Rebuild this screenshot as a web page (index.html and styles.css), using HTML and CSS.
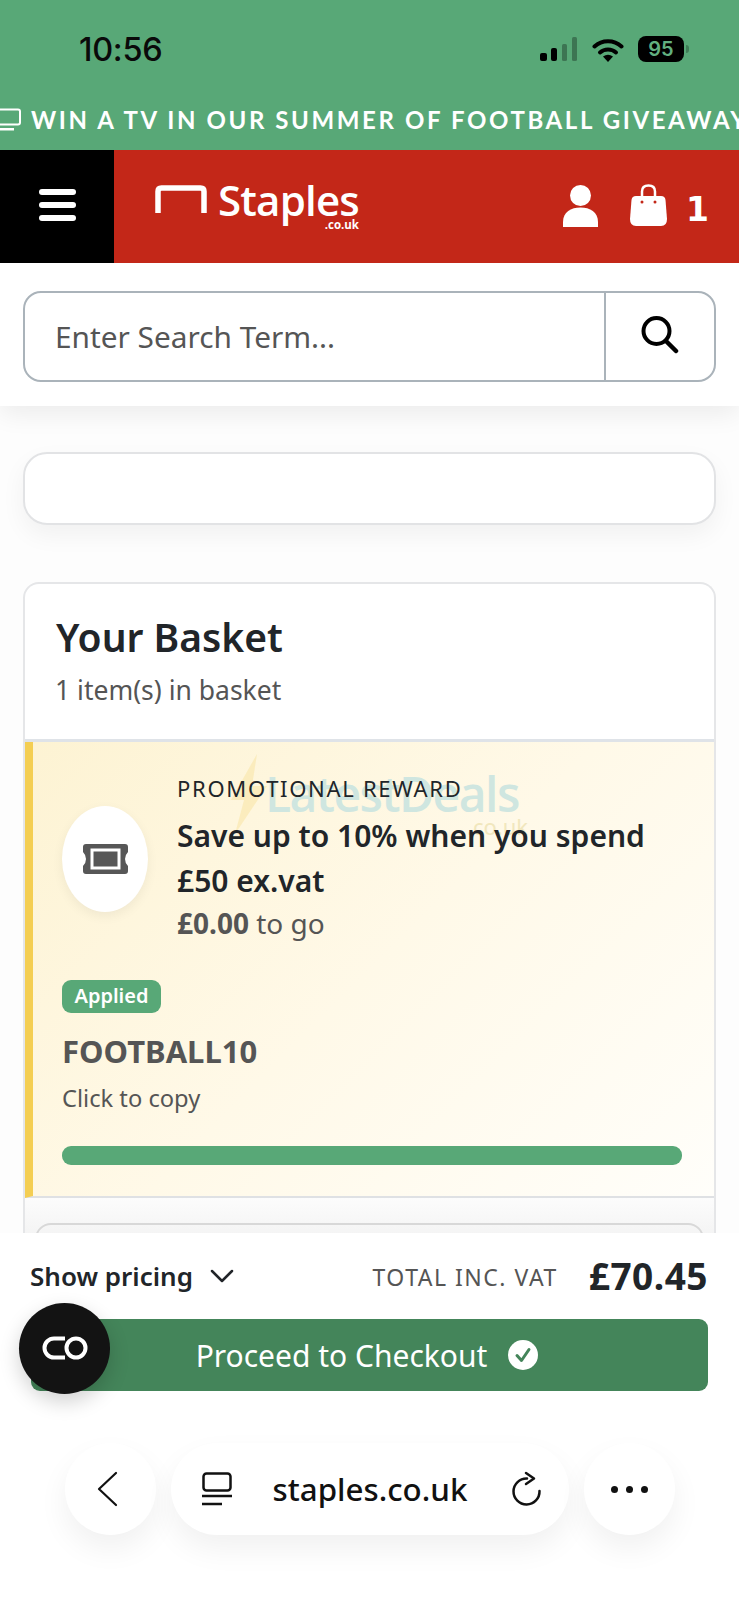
FILE: index.html
```html
<!DOCTYPE html>
<html lang="en">
<head>
<meta charset="utf-8">
<title>Staples basket</title>
<link rel="stylesheet" href="styles.css">
</head>
<body>
<div class="page">
  <header class="top">
    <div class="status">
      <span class="time">10:56</span>
      <div class="status-icons">
        <svg class="signal" viewBox="0 0 37 24" width="37" height="24"><rect x="0" y="16" width="7" height="8" rx="2"/><rect x="11" y="11" width="6" height="13" rx="2"/><rect x="22" y="7" width="5" height="17" rx="1.5" opacity=".3"/><rect x="32" y="0" width="5" height="24" rx="1.5" opacity=".3"/></svg>
        <svg class="wifi" viewBox="0 0 32 25" width="32" height="25"><path d="M2.5 9.5C10 2.5 22 2.500 29.500 9.500" fill="none" stroke="#000" stroke-width="4" stroke-linecap="round"/><path d="M8 15.500C12.500 11.500 19.500 11.500 24 15.500" fill="none" stroke="#000" stroke-width="4" stroke-linecap="round"/><path d="M11 19.500Q16 16 21 19.500L16 25Z"/></svg>
        <span class="battery">95</span>
        <span class="battery-tip"></span>
      </div>
    </div>
    <div class="banner">
      <svg class="banner-icon" viewBox="0 0 22 24" width="22" height="24"><rect x="-6" y="1.500" width="26" height="15" rx="2" fill="none" stroke="#fff" stroke-width="2"/><rect x="-6" y="20" width="20" height="2.500" fill="#fff"/></svg>
      <span>WIN A TV IN OUR SUMMER OF FOOTBALL GIVEAWAY</span>
    </div>
  </header>
  <nav class="brandbar">
    <div class="menu"><span></span><span></span><span></span></div>
    <div class="brand">
      <div class="logo">
        <svg viewBox="0 0 52 28" width="52" height="28"><path d="M3 28V6.500Q3 3 6.500 3H45.500Q49 3 49 6.500V28" fill="none" stroke="#fff" stroke-width="5.500"/></svg>
        <div class="wordmark"><span class="word">Staples</span><span class="tld">.co.uk</span></div>
      </div>
      <div class="actions">
        <svg viewBox="0 0 35 42" width="35" height="42"><circle cx="17.500" cy="10.500" r="10.500" fill="#fff"/><path d="M0 42V37C0 27 8 22.500 17.500 22.500S35 27 35 37V42Z" fill="#fff"/></svg>
        <svg class="bag" viewBox="0 0 37 42" width="37" height="42"><path d="M12 16V7.500C12 3.500 14 1.500 18.500 1.500S25 3.500 25 7.500V16" fill="none" stroke="#fff" stroke-width="2.500"/><path d="M6 12H31Q35 12 35.500 16L37 35Q37 42 31 42H6Q0 42 0 35L1.500 16Q2 12 6 12Z" fill="#fff"/><circle cx="12" cy="18" r="1.500" fill="#c32718"/><circle cx="25" cy="18" r="1.500" fill="#c32718"/></svg>
        <span class="count">1</span>
      </div>
    </div>
  </nav>
  <main class="content">
    <section class="search-wrap">
      <div class="search">
        <div class="search-input">Enter Search Term...</div>
        <div class="search-btn">
          <svg viewBox="0 0 40 40" width="40" height="40"><circle cx="17.500" cy="17" r="13" fill="none" stroke="#000" stroke-width="4"/><path d="M27 27L37 37" stroke="#000" stroke-width="4.500" stroke-linecap="round"/></svg>
        </div>
      </div>
    </section>
    <div class="empty-card"></div>
    <section class="basket">
      <div class="basket-head">
        <h1>Your Basket</h1>
        <p>1 item(s) in basket</p>
      </div>
      <div class="promo">
        <div class="watermark">
          <svg viewBox="0 0 40 80" width="40" height="80"><path d="M28 0L2 46H15L6 80L38 32H23Z" fill="#f8e6a8" opacity=".6"/></svg>
          <span class="wm-word">LatestDeals</span>
          <span class="wm-tld">.co.uk</span>
        </div>
        <div class="promo-top">
          <div class="ticket">
            <svg viewBox="0 0 47 30" width="47" height="30"><path d="M4 0H43Q46 0 46 3V8Q43 11 43 15T46 22V27Q46 30 43 30H4Q1 30 1 27V22Q4 19 4 15T1 8V3Q1 0 4 0Z" fill="#575757"/><rect x="10" y="6" width="27" height="18" fill="#575757" stroke="#fff" stroke-width="3"/></svg>
          </div>
          <div class="promo-text">
            <div class="eyebrow">PROMOTIONAL REWARD</div>
            <div class="headline">Save up to 10% when you spend £50 ex.vat</div>
            <div class="togo"><strong>£0.00</strong> to go</div>
          </div>
        </div>
        <span class="badge">Applied</span>
        <div class="code">FOOTBALL10</div>
        <div class="copy">Click to copy</div>
        <div class="progress"></div>
      </div>
      <div class="next-item"></div>
    </section>
  </main>
  <footer class="footer">
    <div class="totals">
      <div class="show-pricing">
        <span>Show pricing</span>
        <svg viewBox="0 0 24 14" width="24" height="14"><path d="M2 2L12 12L22 2" fill="none" stroke="#212529" stroke-width="2.500" stroke-linecap="round" stroke-linejoin="round"/></svg>
      </div>
      <div class="total">
        <span class="total-label">TOTAL INC. VAT</span>
        <span class="total-price">£70.45</span>
      </div>
    </div>
    <button class="checkout">
      <span>Proceed to Checkout</span>
      <svg viewBox="0 0 30 30" width="30" height="30"><circle cx="15" cy="15" r="15" fill="#fff"/><path d="M9 15.500L13.500 20.500L21 9.500" fill="none" stroke="#44855a" stroke-width="3" stroke-linecap="round" stroke-linejoin="round"/></svg>
    </button>
    <div class="float-btn">
      <svg viewBox="0 0 48 24" width="48" height="24"><path d="M24 2.500H13A9.500 9.500 0 0 0 13 21.500H24" fill="none" stroke="#fff" stroke-width="4"/><circle cx="35" cy="12" r="9.500" fill="none" stroke="#fff" stroke-width="4"/></svg>
    </div>
    <div class="browser">
      <div class="round back">
        <svg viewBox="0 0 22 36" width="22" height="36"><path d="M20 2L3 18L20 34" fill="none" stroke="#111" stroke-width="2.200" stroke-linecap="round" stroke-linejoin="round"/></svg>
      </div>
      <div class="url-pill">
        <svg viewBox="0 0 30 34" width="30" height="34"><rect x="1.500" y="1.500" width="27" height="17" rx="3" fill="none" stroke="#111" stroke-width="2.500"/><path d="M0 24H30M0 32H20" stroke="#111" stroke-width="2.500"/></svg>
        <span class="url">staples.co.uk</span>
        <svg viewBox="0 0 30 36" width="30" height="36"><path d="M15 7.500A13 13 0 1 0 27.500 20" fill="none" stroke="#111" stroke-width="2.500" stroke-linecap="round"/><path d="M14 2L22 7.500L14 13" fill="none" stroke="#111" stroke-width="2.500" stroke-linecap="round" stroke-linejoin="round"/></svg>
      </div>
      <div class="round dots"><span></span><span></span><span></span></div>
    </div>
  </footer>
</div>
</body>
</html>
```
FILE: styles.css
```css
* { box-sizing: border-box; }
html, body { margin: 0; padding: 0; }
body { font-family: "Noto Sans", sans-serif; color: #212529; background: #fff; }
.page { position: relative; width: 739px; height: 1600px; display: flex; flex-direction: column; overflow: hidden; background: #fff; }

.top { height: 150px; background: #58a877; flex: none; }
.status { height: 98px; display: flex; justify-content: space-between; align-items: center; padding: 0 50px 0 79px; }
.time { font-family: "Inter", sans-serif; font-size: 32.500px; font-weight: 500; color: #0a0a0a; letter-spacing: -.3px; }
.status-icons { display: flex; align-items: center; height: 26px; }
.signal { fill: #000; margin-right: 15px; }
.wifi { fill: #000; margin-right: 14px; }
.battery { width: 46px; height: 26px; border-radius: 8px; background: #000; color: #62b080; font-family: "Inter", sans-serif; font-size: 20px; font-weight: 600; text-align: center; line-height: 26px; }
.battery-tip { width: 3px; height: 8px; margin-left: 2px; background: #3f7e57; border-radius: 0 3px 3px 0; }
.banner { display: flex; align-items: center; gap: 9px; height: 43px; white-space: nowrap; color: #fff; font-family: "Lato", sans-serif; font-size: 24px; font-weight: 700; letter-spacing: 2.6px; }
.banner-icon { flex: none; }

.brandbar { height: 113px; flex: none; display: flex; }
.menu { width: 114px; background: #000; display: flex; flex-direction: column; justify-content: center; align-items: center; gap: 7px; padding-bottom: 4px; }
.menu span { width: 37px; height: 6px; border-radius: 3px; background: #fff; }
.brand { flex: 1; background: #c32718; display: flex; justify-content: space-between; align-items: center; padding: 0 30px 0 41px; }
.logo { display: flex; align-items: flex-start; gap: 11px; margin-bottom: 4px; height: 50px; }
.logo svg { margin-top: 5px; }
.wordmark { display: flex; flex-direction: column; align-items: flex-end; color: #fff; font-family: "Open Sans", sans-serif; }
.word { font-size: 42px; font-weight: 600; line-height: 39px; letter-spacing: -.8px; }
.tld { font-size: 11.500px; font-weight: 700; line-height: 11px; }
.actions { display: flex; align-items: center; gap: 32px; margin-bottom: 1px; }
.bag { margin-top: -3px; }
.count { color: #fff; font-family: "DejaVu Sans", sans-serif; font-size: 33px; font-weight: 700; line-height: 40px; margin-left: -13px; margin-top: 7px; }

.content { flex: 1; min-height: 0; overflow: hidden; background: #fdfdfd; }
.search-wrap { height: 143px; padding: 28px 23px 0; background: #fff; box-shadow: 0 8px 24px rgba(0,0,0,.07); position: relative; }
.search { height: 91px; display: flex; border: 2px solid #aab3ba; border-radius: 18px; background: #fff; }
.search-input { flex: 1; display: flex; align-items: center; padding-left: 30px; color: #555; font-size: 29.800px; }
.search-btn { width: 110px; display: flex; align-items: center; justify-content: center; border-left: 2px solid #aab3ba; padding: 0 2px 5px 0; }
.empty-card { height: 73px; margin: 46px 23px 0; border: 2px solid #e2e3e5; border-radius: 24px; background: #fff; box-shadow: 0 10px 24px rgba(0,0,0,.05); }

.basket { margin: 57px 23px 0; border: 2px solid #e5e6e8; border-bottom: 0; border-radius: 16px 16px 0 0; background: #fff; overflow: hidden; }
.basket-head { height: 158px; padding: 27px 31px 0; border-bottom: 3px solid #dfe3e8; }
.basket-head h1 { margin: 0; font-size: 39px; font-weight: 600; line-height: 52px; color: #212529; }
.basket-head p { margin: 9px 0 0 -1px; font-size: 26.500px; line-height: 36px; color: #555; }

.promo { position: relative; height: 456px; padding: 31px 32px 0 29px; border-left: 8px solid #f4ce52; border-bottom: 2px solid #dfe1e4; background: linear-gradient(135deg, #fdf3d3 0%, #fff9e8 50%, #fffefa 100%); }
.watermark { position: absolute; left: 196px; top: 10px; width: 300px; height: 90px; }
.watermark svg { position: absolute; left: 0; top: 2px; }
.wm-word { position: absolute; left: 36px; top: 12px; font-family: "Open Sans", sans-serif; font-size: 48px; font-weight: 600; letter-spacing: -1.500px; color: #cfe6e0; line-height: 60px; white-space: nowrap; }
.wm-tld { position: absolute; left: 238px; top: 62px; font-size: 22px; color: #f1e7bd; line-height: 24px; }
.promo-top { position: relative; display: flex; align-items: center; gap: 29px; }
.ticket { width: 86px; height: 106px; flex: none; margin-top: 2px; border-radius: 50%; background: #fff; box-shadow: 0 4px 12px rgba(0,0,0,.06); display: flex; align-items: center; justify-content: center; }
.promo-text { flex: 1; min-width: 0; }
.eyebrow { font-size: 22px; line-height: 30px; letter-spacing: 1.700px; color: #212529; }
.headline { font-size: 30px; font-weight: 600; line-height: 45px; margin-top: 10px; color: #212529; }
.togo { font-size: 28px; line-height: 38px; margin-top: 1px; color: #555; }
.togo strong { font-weight: 700; }
.badge { position: relative; display: inline-block; margin-top: 38px; width: 99px; height: 33px; border-radius: 9px; background: #58a877; color: #fff; font-size: 20px; font-weight: 600; text-align: center; line-height: 32px; }
.code { position: relative; margin-top: 18px; font-size: 31px; font-weight: 700; line-height: 40px; color: #555; }
.copy { position: relative; margin-top: 10px; font-size: 23.700px; line-height: 34px; color: #555; }
.progress { position: relative; height: 19px; margin-top: 31px; border-radius: 9px; background: #58a877; }
.next-item { height: 60px; padding-top: 0; background: linear-gradient(#fcfcfc, #efefef); position: relative; }
.next-item::before { content: ""; position: absolute; left: 10px; right: 10px; top: 25px; height: 40px; border: 2px solid #d8d8d8; border-radius: 16px; }

.footer { position: relative; height: 367px; flex: none; padding: 0 31px; background: #fff; }
.totals { height: 86px; display: flex; justify-content: space-between; align-items: center; }
.show-pricing { display: flex; align-items: center; gap: 17px; font-size: 26px; font-weight: 600; color: #212529; margin-left: -1px; }
.total { display: flex; align-items: center; gap: 31px; }
.total-label { font-size: 23px; letter-spacing: 1.500px; color: #555; margin-top: 2px; }
.total-price { font-size: 37px; font-weight: 700; color: #212529; letter-spacing: .5px; line-height: 44px; }
.checkout { width: 677px; height: 72px; border: 0; border-radius: 9px; background: #44855a; color: #fff; display: flex; align-items: center; justify-content: center; gap: 21px; padding: 0 5px 0 0; font-family: inherit; font-size: 30px; }
.float-btn { position: absolute; left: 19px; top: 70px; width: 91px; height: 91px; border-radius: 50%; background: #131313; box-shadow: 0 8px 20px rgba(0,0,0,.18); display: flex; align-items: center; justify-content: center; padding-bottom: 2px; }
.browser { display: flex; align-items: stretch; justify-content: center; gap: 15px; height: 92px; margin: 52px -31px 0; padding-left: 0; }
.round, .url-pill { background: #fff; box-shadow: 0 14px 30px rgba(0,0,0,.06); border-radius: 46px; display: flex; align-items: center; justify-content: center; }
.round { width: 91px; }
.back { padding-right: 6px; }
.url-pill { width: 398px; justify-content: space-between; padding: 0 26px 0 31px; }
.url { font-size: 31.300px; font-weight: 500; color: #111; margin-left: -4px; }
.dots { gap: 8px; }
.dots span { width: 7px; height: 7px; border-radius: 50%; background: #111; }
```
